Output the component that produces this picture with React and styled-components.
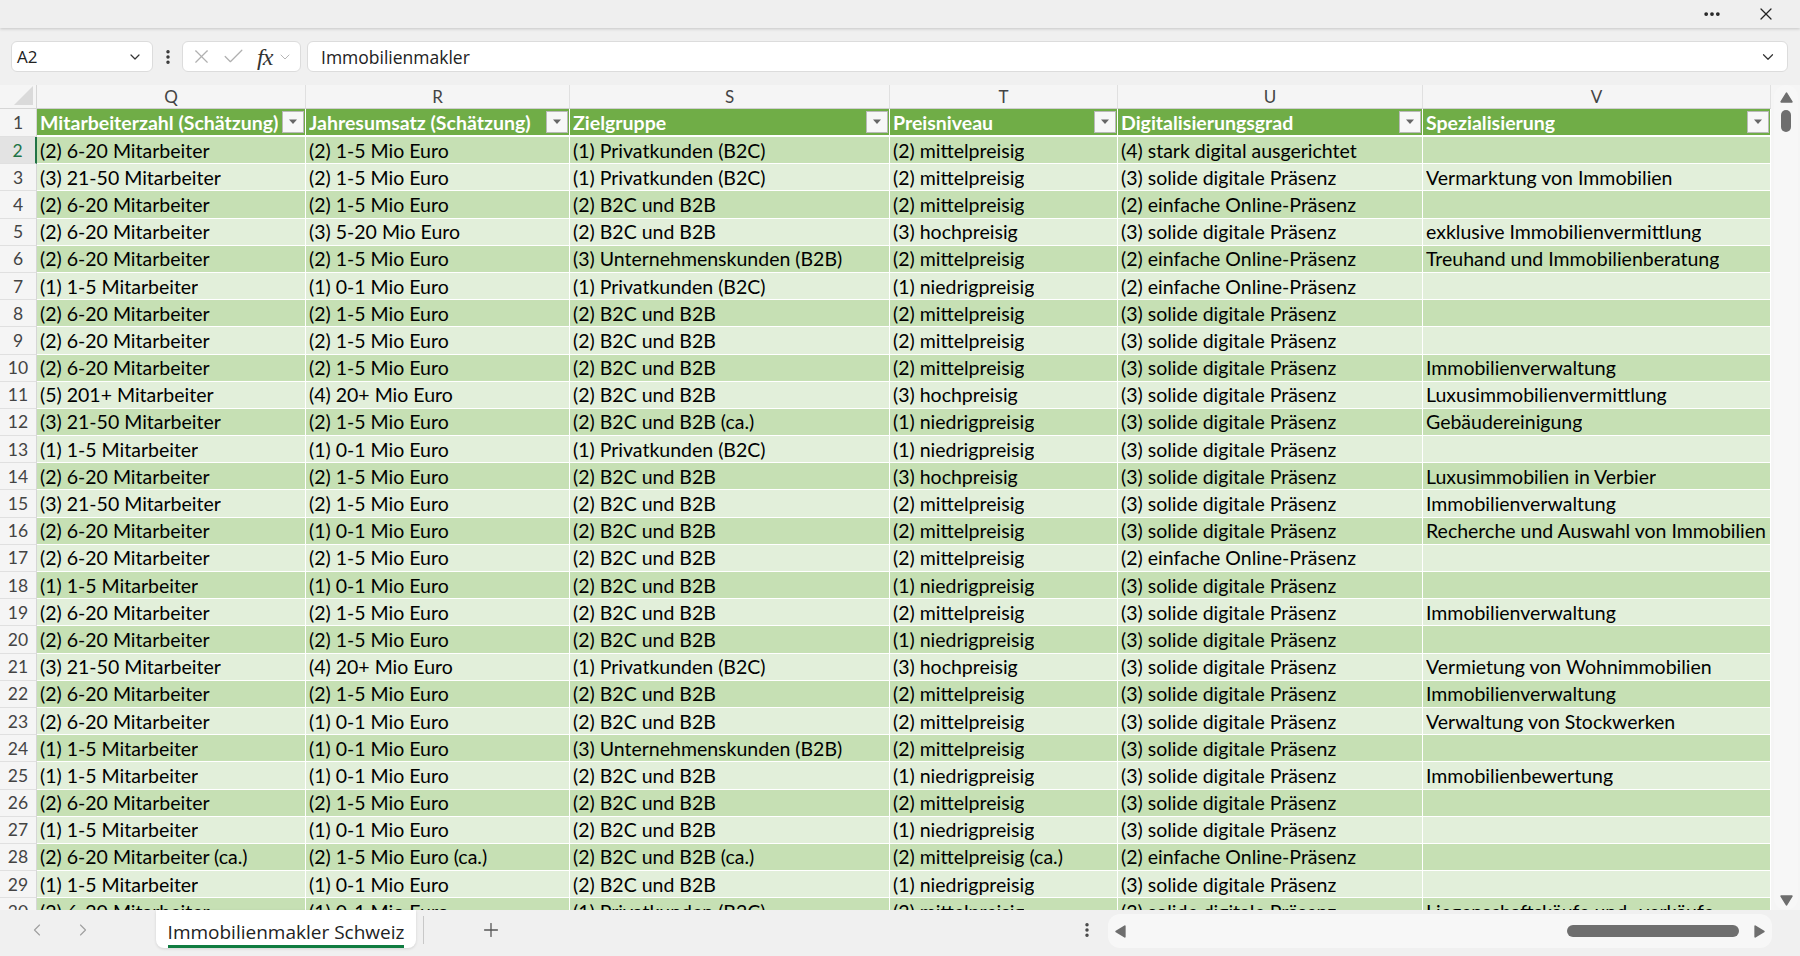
import React from 'react';
import styled, { createGlobalStyle } from 'styled-components';
import {
  ChevronDown,
  ChevronLeft,
  ChevronRight,
  X,
  Check,
  Plus,
  Ellipsis,
  EllipsisVertical,
} from 'lucide-react';

const GlobalStyle = createGlobalStyle`
  html, body {
    margin: 0;
    padding: 0;
    background: #f0f0f0;
    overflow: hidden;
  }
  * {
    box-sizing: border-box;
  }
`;

const UI_FONT = `"Open Sans", "Noto Sans", sans-serif`;
const CELL_FONT = `Lato, "Noto Sans", sans-serif`;

const COLS = [
  { key: 'Q', title: 'Mitarbeiterzahl (Schätzung)', width: 269 },
  { key: 'R', title: 'Jahresumsatz (Schätzung)', width: 264 },
  { key: 'S', title: 'Zielgruppe', width: 320 },
  { key: 'T', title: 'Preisniveau', width: 228 },
  { key: 'U', title: 'Digitalisierungsgrad', width: 305 },
  { key: 'V', title: 'Spezialisierung', width: 348 },
];

const M6 = '(2) 6-20 Mitarbeiter';
const M50 = '(3) 21-50 Mitarbeiter';
const M5 = '(1) 1-5 Mitarbeiter';
const U5 = '(2) 1-5 Mio Euro';
const U1 = '(1) 0-1 Mio Euro';
const PRIV = '(1) Privatkunden (B2C)';
const BOTH = '(2) B2C und B2B';
const B2B = '(3) Unternehmenskunden (B2B)';
const MID = '(2) mittelpreisig';
const LOW = '(1) niedrigpreisig';
const HIGH = '(3) hochpreisig';
const SOL = '(3) solide digitale Präsenz';
const EIN = '(2) einfache Online-Präsenz';

const rows = [
  [M6, U5, PRIV, MID, '(4) stark digital ausgerichtet', ''],
  [M50, U5, PRIV, MID, SOL, 'Vermarktung von Immobilien'],
  [M6, U5, BOTH, MID, EIN, ''],
  [M6, '(3) 5-20 Mio Euro', BOTH, HIGH, SOL, 'exklusive Immobilienvermittlung'],
  [M6, U5, B2B, MID, EIN, 'Treuhand und Immobilienberatung'],
  [M5, U1, PRIV, LOW, EIN, ''],
  [M6, U5, BOTH, MID, SOL, ''],
  [M6, U5, BOTH, MID, SOL, ''],
  [M6, U5, BOTH, MID, SOL, 'Immobilienverwaltung'],
  ['(5) 201+ Mitarbeiter', '(4) 20+ Mio Euro', BOTH, HIGH, SOL, 'Luxusimmobilienvermittlung'],
  [M50, U5, '(2) B2C und B2B (ca.)', LOW, SOL, 'Gebäudereinigung'],
  [M5, U1, PRIV, LOW, SOL, ''],
  [M6, U5, BOTH, HIGH, SOL, 'Luxusimmobilien in Verbier'],
  [M50, U5, BOTH, MID, SOL, 'Immobilienverwaltung'],
  [M6, U1, BOTH, MID, SOL, 'Recherche und Auswahl von Immobilien'],
  [M6, U5, BOTH, MID, EIN, ''],
  [M5, U1, BOTH, LOW, SOL, ''],
  [M6, U5, BOTH, MID, SOL, 'Immobilienverwaltung'],
  [M6, U5, BOTH, LOW, SOL, ''],
  [M50, '(4) 20+ Mio Euro', PRIV, HIGH, SOL, 'Vermietung von Wohnimmobilien'],
  [M6, U5, BOTH, MID, SOL, 'Immobilienverwaltung'],
  [M6, U1, BOTH, MID, SOL, 'Verwaltung von Stockwerken'],
  [M5, U1, B2B, MID, SOL, ''],
  [M5, U1, BOTH, LOW, SOL, 'Immobilienbewertung'],
  [M6, U5, BOTH, MID, SOL, ''],
  [M5, U1, BOTH, LOW, SOL, ''],
  ['(2) 6-20 Mitarbeiter (ca.)', '(2) 1-5 Mio Euro (ca.)', '(2) B2C und B2B (ca.)', '(2) mittelpreisig (ca.)', EIN, ''],
  [M5, U1, BOTH, LOW, SOL, ''],
  [M6, U1, PRIV, MID, SOL, 'Liegenschaftskäufe und -verkäufe'],
];

const Window = styled.div`
  height: 100vh;
  display: flex;
  flex-direction: column;
  background: #f0f0f0;
  font-family: ${UI_FONT};
`;

const TopBar = styled.div`
  height: 28px;
  flex: none;
  display: flex;
  align-items: center;
  justify-content: flex-end;
  gap: 34px;
  padding-right: 24px;
  background: #efefef;
  box-shadow: 0 1px 3px rgba(0, 0, 0, 0.18);
  color: #222;
  position: relative;
  z-index: 1;
`;

const FormulaRow = styled.div`
  flex: none;
  display: flex;
  align-items: center;
  height: 57px;
  padding: 13px 12px 13px 11px;
  background: #f0f0f0;
`;

const Box = styled.div`
  height: 31px;
  background: #fff;
  border: 1px solid #dcdcdc;
  border-radius: 6px;
  display: flex;
  align-items: center;
`;

const NameBox = styled(Box)`
  width: 142px;
  padding: 0 9px 0 5px;
  justify-content: space-between;
  font-size: 17px;
  color: #222;
`;

const Dots = styled.div`
  width: 29px;
  display: flex;
  justify-content: center;
  color: #333;
`;

const FxBox = styled(Box)`
  width: 119px;
  padding: 0 3px 0 7px;
  gap: 8px;
  color: #b0b0b0;
`;

const Fx = styled.span`
  font-family: "Liberation Serif", "DejaVu Serif", serif;
  font-style: italic;
  font-size: 24px;
  line-height: 24px;
  color: #333;
  margin: 0 -3px 0 3px;
  letter-spacing: -1px;
`;

const FormulaInput = styled(Box)`
  flex: 1;
  margin-left: 6px;
  padding: 0 10px 0 13px;
  justify-content: space-between;
  font-size: 17.5px;
  color: #222;
`;

const Sheet = styled.div`
  flex: 1;
  min-height: 0;
  display: flex;
  background: #f5f5f5;
`;

const GridWrap = styled.div`
  width: 1771px;
  flex: none;
  overflow: hidden;
`;

const Grid = styled.div`
  display: grid;
  grid-template-columns: 37px ${COLS.map((c) => c.width + 'px').join(' ')};
  grid-template-rows: 24px 28px;
  grid-auto-rows: 27.2px;
  font-family: ${CELL_FONT};
`;

const Corner = styled.div`
  background: #f5f5f5;
  border-bottom: 1px solid #d6d6d6;
  border-right: 1px solid #d6d6d6;
  display: flex;
  align-items: flex-end;
  justify-content: flex-end;
  padding: 0 3px 3px 0;
`;

const CornerTri = styled.div`
  width: 0;
  height: 0;
  border-left: 19px solid transparent;
  border-bottom: 19px solid #dadada;
`;

const ColLetter = styled.div`
  background: #f5f5f5;
  border-bottom: 1px solid #cfcfcf;
  border-right: 1px solid #e0e0e0;
  display: flex;
  align-items: center;
  justify-content: center;
  font-size: 17px;
  color: #444;
`;

const RowNum = styled.div`
  background: ${(p) => (p.$active ? '#e3e3e3' : '#f5f5f5')};
  color: ${(p) => (p.$active ? '#217346' : '#444')};
  border-bottom: 1px solid #e0e0e0;
  border-right: ${(p) => (p.$active ? '2px solid #217346' : '1px solid #d6d6d6')};
  display: flex;
  align-items: center;
  justify-content: center;
  font-size: 17.5px;
`;

const bandColor = {
  head: '#70ad47',
  dark: '#c6e0b4',
  light: '#e2efda',
};

const Cell = styled.div`
  background: ${(p) => bandColor[p.$band]};
  color: ${(p) => (p.$band === 'head' ? '#fff' : '#000')};
  font-weight: ${(p) => (p.$band === 'head' ? 700 : 400)};
  border-right: 1px solid #fff;
  border-bottom: ${(p) => (p.$band === 'head' ? '2px' : '1px')} solid #fff;
  display: flex;
  align-items: center;
  justify-content: space-between;
  padding: 0 1px 0 3px;
  font-size: 19.5px;
  white-space: nowrap;
  overflow: hidden;
`;

const CellText = styled.span`
  overflow: hidden;
`;

const FilterBtn = styled.div`
  flex: none;
  width: 22px;
  height: 22px;
  background: #f7f7f7;
  border: 1px solid #b9b9b9;
  display: flex;
  align-items: center;
  justify-content: center;
  margin-left: 4px;
`;

const VScroll = styled.div`
  flex: 1;
  display: flex;
  flex-direction: column;
  align-items: center;
  padding: 0 2px 0 3px;
`;

const VTrack = styled.div`
  width: 24px;
  height: 100%;
  background: #f7f7f7;
  border-radius: 12px;
  display: flex;
  flex-direction: column;
  align-items: center;
  justify-content: space-between;
  padding: 4px 0 3px;
`;

const VTop = styled.div`
  display: flex;
  flex-direction: column;
  align-items: center;
  gap: 6px;
  padding-top: 2px;
`;

const VThumb = styled.div`
  width: 10px;
  height: 22px;
  background: #6e6e6e;
  border-radius: 5px;
`;

const BottomBar = styled.div`
  height: 46px;
  flex: none;
  display: flex;
  align-items: flex-start;
  background: #f0f0f0;
`;

const NavArrows = styled.div`
  width: 156px;
  height: 40px;
  display: flex;
  align-items: center;
  gap: 26px;
  padding-left: 27px;
  color: #a0a0a0;
`;

const Tab = styled.div`
  width: 260px;
  height: 38px;
  background: #fff;
  border-radius: 0 0 8px 8px;
  box-shadow: 0 1px 3px rgba(0, 0, 0, 0.12);
  display: flex;
  align-items: center;
  justify-content: center;
  font-size: 19px;
  color: #222;
`;

const TabLabel = styled.span`
  border-bottom: 3px solid #107c41;
  padding: 3px 0 1px;
  line-height: 24px;
  margin-top: 6px;
`;

const TabSep = styled.div`
  width: 1px;
  height: 28px;
  background: #c8c8c8;
  margin: 6px 0 0 7px;
`;

const PlusBtn = styled.div`
  height: 40px;
  display: flex;
  align-items: center;
  margin-left: 56px;
  color: #555;
`;

const Spacer = styled.div`
  flex: 1;
`;

const MoreV = styled.div`
  height: 40px;
  display: flex;
  align-items: center;
  margin-right: 12px;
  color: #444;
`;

const HTrack = styled.div`
  width: 664px;
  height: 34px;
  margin: 4px 28px 0 0;
  background: #f7f7f7;
  border-radius: 12px;
  display: flex;
  align-items: center;
  padding: 0 6px 0 6px;
`;

const HThumb = styled.div`
  width: 172px;
  height: 12px;
  border-radius: 6px;
  background: #6e6e6e;
  margin: 0 14px 0 auto;
`;

const Tri = ({ dir = 'up', size = 12, color = '#6e6e6e' }) => {
  const pts = {
    up: '1,10 6,2 11,10',
    down: '1,2 6,10 11,2',
    left: '10,1 2,6 10,11',
    right: '2,1 10,6 2,11',
  }[dir];
  return (
    <svg width={size} height={size} viewBox="0 0 12 12">
      <polygon points={pts} fill={color} strokeLinejoin="round" stroke={color} strokeWidth="1.5" />
    </svg>
  );
};

const FilterArrow = () => (
  <svg width="10" height="6" viewBox="0 0 10 6">
    <polygon points="1,0.5 9,0.5 5,5" fill="#666" />
  </svg>
);

function App() {
  return (
    <Window>
      <GlobalStyle />
      <TopBar>
        <Ellipsis size={20} strokeWidth={2.5} />
        <X size={20} strokeWidth={1.5} />
      </TopBar>

      <FormulaRow>
        <NameBox>
          <span>A2</span>
          <ChevronDown size={16} strokeWidth={1.8} color="#333" />
        </NameBox>
        <Dots>
          <EllipsisVertical size={18} strokeWidth={2.6} />
        </Dots>
        <FxBox>
          <X size={23} strokeWidth={1.2} />
          <Check size={25} strokeWidth={1.2} />
          <Fx>fx</Fx>
          <ChevronDown size={16} strokeWidth={1.4} />
        </FxBox>
        <FormulaInput>
          <span>Immobilienmakler</span>
          <ChevronDown size={18} strokeWidth={1.6} color="#333" />
        </FormulaInput>
      </FormulaRow>

      <Sheet>
        <GridWrap>
          <Grid>
            <Corner>
              <CornerTri />
            </Corner>
            {COLS.map((c) => (
              <ColLetter key={c.key}>{c.key}</ColLetter>
            ))}

            <RowNum>1</RowNum>
            {COLS.map((c) => (
              <Cell key={c.key} $band="head">
                <CellText>{c.title}</CellText>
                <FilterBtn>
                  <FilterArrow />
                </FilterBtn>
              </Cell>
            ))}

            {rows.map((r, i) => {
              const num = i + 2;
              const band = num % 2 === 0 ? 'dark' : 'light';
              return (
                <React.Fragment key={num}>
                  <RowNum $active={num === 2}>{num}</RowNum>
                  {r.map((v, j) => (
                    <Cell key={j} $band={band}>
                      <CellText>{v}</CellText>
                    </Cell>
                  ))}
                </React.Fragment>
              );
            })}
          </Grid>
        </GridWrap>
        <VScroll>
          <VTrack>
            <VTop>
              <Tri dir="up" size={13} />
              <VThumb />
            </VTop>
            <Tri dir="down" size={13} />
          </VTrack>
        </VScroll>
      </Sheet>

      <BottomBar>
        <NavArrows>
          <ChevronLeft size={20} strokeWidth={1.4} />
          <ChevronRight size={20} strokeWidth={1.4} />
        </NavArrows>
        <Tab>
          <TabLabel>Immobilienmakler Schweiz</TabLabel>
        </Tab>
        <TabSep />
        <PlusBtn>
          <Plus size={22} strokeWidth={1.4} />
        </PlusBtn>
        <Spacer />
        <MoreV>
          <EllipsisVertical size={18} strokeWidth={2.6} />
        </MoreV>
        <HTrack>
          <Tri dir="left" size={13} />
          <HThumb />
          <Tri dir="right" size={13} />
        </HTrack>
      </BottomBar>
    </Window>
  );
}

export default App;
